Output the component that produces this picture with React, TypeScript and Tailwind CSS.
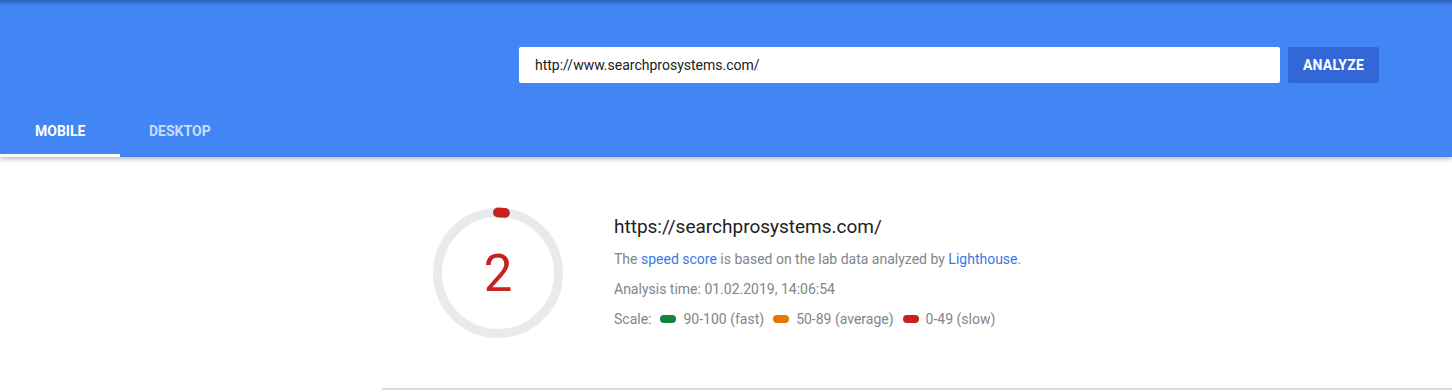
import React from 'react';

const font = { fontFamily: 'Roboto, "Liberation Sans", Arial, sans-serif' };

function Gauge({ score }: { score: number }) {
  return (
    <div className="relative w-[140px] h-[140px] flex items-center justify-center">
      <svg width="140" height="140" viewBox="0 0 140 140" className="absolute inset-0">
        <circle cx="70" cy="70" r="60.5" fill="none" stroke="#e8eaed" strokeWidth="9" />
        <circle
          cx="70"
          cy="70"
          r="60.5"
          fill="none"
          stroke="#c7221f"
          strokeWidth="10"
          strokeLinecap="round"
          strokeDasharray="7 400"
          transform="rotate(-90 70 70)"
        />
      </svg>
      <span className="relative text-[51px] leading-none text-[#c7221f] font-normal">{score}</span>
    </div>
  );
}

function Legend({ color, label }: { color: string; label: string }) {
  return (
    <span className="flex items-center gap-[7px]">
      <span className={`inline-block w-[16px] h-[8px] rounded-full ${color}`}></span>
      <span>{label}</span>
    </span>
  );
}

export default function App() {
  return (
    <div className="w-[1452px] h-[392px] bg-white overflow-hidden" style={font}>
      {/* Шапка */}
      <header className="relative z-10 bg-[#4285f4] shadow-[0_2px_5px_rgba(0,0,0,0.28)]">
        <div className="absolute inset-x-0 top-0 h-[6px] bg-gradient-to-b from-[#2f62b8] to-[#4285f4]"></div>
        <div className="flex pt-[47px] pl-[519px] gap-[8px]">
          <div className="w-[761px] h-[36px] bg-white rounded-[2px] flex items-center pl-[16px] text-[14px] text-[#212121]">
            http://www.searchprosystems.com/
          </div>
          <button className="w-[91px] h-[36px] bg-[#3367d6] rounded-[2px] text-white text-[14px] font-bold tracking-[0.2px]">
            ANALYZE
          </button>
        </div>
        <nav className="flex mt-[26px] h-[48px]">
          <div className="w-[120px] flex items-center pl-[35px] text-[14px] font-bold text-white border-b-[3px] border-white">
            MOBILE
          </div>
          <div className="flex items-center pl-[29px] pb-[3px] text-[14px] font-bold text-[#c9dcfb]">
            DESKTOP
          </div>
        </nav>
      </header>

      {/* Результат */}
      <div className="flex items-start gap-[46px] pl-[428px] pt-[46px]">
        <Gauge score={2} />
        <div className="pt-[12px] text-[14px] text-[#80868b]">
          <div className="text-[19px] text-[#212121] leading-[24px]">https://searchprosystems.com/</div>
          <p className="mt-[10px] leading-[20px]">
            The <span className="text-[#3b78e7]">speed score</span> is based on the lab data analyzed by{' '}
            <span className="text-[#3b78e7]">Lighthouse</span>.
          </p>
          <p className="mt-[10px] leading-[20px]">Analysis time: 01.02.2019, 14:06:54</p>
          <div className="mt-[10px] leading-[20px] flex items-center gap-[9px]">
            <span>Scale:</span>
            <Legend color="bg-[#178239]" label="90-100 (fast)" />
            <Legend color="bg-[#e67700]" label="50-89 (average)" />
            <Legend color="bg-[#c7221f]" label="0-49 (slow)" />
          </div>
        </div>
      </div>

      <div className="ml-[382px] mt-[45px] border-t-[2px] border-[#dadce0]"></div>
    </div>
  );
}
